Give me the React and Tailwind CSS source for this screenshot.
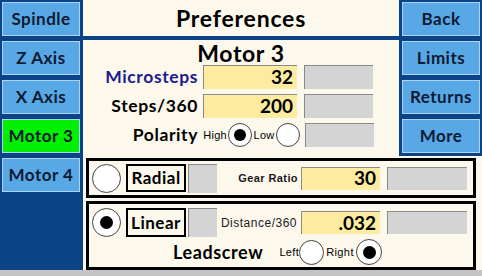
import React from "react";

const F = { fontFamily: "Lato, 'Liberation Sans', sans-serif" };
const T = { fontFamily: "'Liberation Sans', Arial, sans-serif" };

function NavBtn({ label, active }) {
  return (
    <div
      className={`h-[34px] w-[78px] flex items-center justify-center border border-[#a9d4f5] text-[17px] font-bold tracking-[0.5px] text-[#0d1a33] ${
        active ? "bg-[#00f000]" : "bg-[#58a8e6]"
      }`}
      style={F}
    >
      {label}
    </div>
  );
}

function Radio({ size, dot, on }) {
  return (
    <div
      className="rounded-full bg-white border border-[#444] flex items-center justify-center shrink-0"
      style={{ width: size, height: size }}
    >
      {on && <div className="rounded-full bg-black" style={{ width: dot, height: dot }} />}
    </div>
  );
}

function Yellow({ value, w, h }) {
  return (
    <div
      className="bg-[#fdeba0] border-t border-l border-[#8a8a8a] flex items-center justify-end pr-[4px] text-[19px] font-bold text-black shrink-0"
      style={{ width: w, height: h, ...F }}
    >
      {value}
    </div>
  );
}

function Gray({ w, h }) {
  return (
    <div
      className="bg-[#d4d4d4] border-t border-l border-[#8a8a8a] shrink-0"
      style={{ width: w, height: h }}
    />
  );
}

function Label({ children, color }) {
  return (
    <div
      className={`w-[115px] text-right text-[17.5px] font-bold tracking-[0.6px] whitespace-nowrap ${color}`}
      style={F}
    >
      {children}
    </div>
  );
}

export default function App() {
  return (
    <div className="w-[482px] h-[276px] bg-[#0b4386] flex flex-col overflow-hidden">
      <div className="flex h-[270px]">
        <div className="w-[83px] flex flex-col gap-[5px] pt-[2px] pl-[2px]">
          <NavBtn label="Spindle" />
          <NavBtn label="Z Axis" />
          <NavBtn label="X Axis" />
          <NavBtn label="Motor 3" active />
          <NavBtn label="Motor 4" />
        </div>
        <div className="w-[399px] flex flex-col">
          <div className="flex h-[156px]">
            <div className="w-[316px] flex flex-col gap-[4px]">
              <div
                className="h-[36px] bg-[#fdf8ec] flex items-center justify-center text-[23px] font-bold tracking-[0.8px] text-black"
                style={F}
              >
                Preferences
              </div>
              <div className="flex-1 bg-[#fdf8ec] flex flex-col">
                <div
                  className="h-[25px] flex items-center justify-center text-[23px] font-bold tracking-[0.6px] text-black leading-none pt-[2px]"
                  style={F}
                >
                  Motor 3
                </div>
                <div className="flex flex-col gap-[5px]">
                  <div className="flex items-center h-[24px]">
                    <Label color="text-[#1b1b8e]">Microsteps</Label>
                    <div className="ml-[5px]">
                      <Yellow value="32" w={94} h={24} />
                    </div>
                    <div className="ml-[7px]">
                      <Gray w={69} h={24} />
                    </div>
                  </div>
                  <div className="flex items-center h-[24px]">
                    <Label color="text-black">Steps/360</Label>
                    <div className="ml-[5px]">
                      <Yellow value="200" w={94} h={24} />
                    </div>
                    <div className="ml-[7px]">
                      <Gray w={69} h={24} />
                    </div>
                  </div>
                  <div className="flex items-center h-[24px]">
                    <Label color="text-black">Polarity</Label>
                    <div
                      className="w-[29px] text-right text-[11px] tracking-[0.3px] text-black whitespace-nowrap"
                      style={T}
                    >
                      High
                    </div>
                    <div className="ml-[1px]">
                      <Radio size={24} dot={12} on />
                    </div>
                    <div
                      className="w-[24px] text-center text-[11px] tracking-[0.2px] text-black whitespace-nowrap"
                      style={T}
                    >
                      Low
                    </div>
                    <Radio size={24} dot={12} />
                    <div className="ml-[5px]">
                      <Gray w={69} h={24} />
                    </div>
                  </div>
                </div>
              </div>
            </div>
            <div className="w-[83px] flex flex-col gap-[5px] pt-[2px] pl-[3px]">
              <NavBtn label="Back" />
              <NavBtn label="Limits" />
              <NavBtn label="Returns" />
              <NavBtn label="More" />
            </div>
          </div>
          <div className="flex-1 bg-[#fdf8ec] pt-[2px] pl-[3px] pr-[6px] flex flex-col gap-[3px]">
            <div className="h-[40px] border-[3px] border-black flex items-center pl-[3px]">
              <Radio size={29} dot={13} />
              <div
                className="ml-[5px] w-[60px] h-[28px] border-2 border-black flex items-center justify-center text-[17px] font-bold tracking-[0.5px] text-black"
                style={F}
              >
                Radial
              </div>
              <div className="ml-[2px]">
                <Gray w={29} h={29} />
              </div>
              <div
                className="w-[81px] text-right text-[11px] font-bold tracking-[0.4px] text-[#1a1a1a] whitespace-nowrap"
                style={T}
              >
                Gear Ratio
              </div>
              <div className="ml-[3px]">
                <Yellow value="30" w={79} h={23} />
              </div>
              <div className="ml-[7px]">
                <Gray w={80} h={23} />
              </div>
            </div>
            <div className="flex-1 border-[3px] border-black flex flex-col pl-[3px]">
              <div className="flex items-center h-[35px] pt-[2px]">
                <Radio size={29} dot={13} on />
                <div
                  className="ml-[5px] w-[60px] h-[29px] border-2 border-black flex items-center justify-center text-[17px] font-bold tracking-[0.5px] text-black"
                  style={F}
                >
                  Linear
                </div>
                <div className="ml-[2px]">
                  <Gray w={29} h={29} />
                </div>
                <div
                  className="w-[81px] text-right pr-[1px] text-[12px] tracking-[0.5px] text-[#1a1a1a] whitespace-nowrap"
                  style={T}
                >
                  Distance/360
                </div>
                <div className="ml-[3px]">
                  <Yellow value=".032" w={79} h={23} />
                </div>
                <div className="ml-[7px]">
                  <Gray w={80} h={23} />
                </div>
              </div>
              <div className="flex items-center h-[26px]">
                <div
                  className="w-[173px] pl-[81px] text-[18px] font-bold tracking-[0.6px] text-black whitespace-nowrap"
                  style={F}
                >
                  Leadscrew
                </div>
                <div
                  className="w-[34px] text-right text-[11px] tracking-[0.3px] text-black whitespace-nowrap"
                  style={T}
                >
                  Left
                </div>
                <Radio size={25} dot={13} />
                <div
                  className="w-[32px] text-center text-[11px] tracking-[0.4px] text-black whitespace-nowrap"
                  style={T}
                >
                  Right
                </div>
                <Radio size={26} dot={13} on />
              </div>
            </div>
          </div>
        </div>
      </div>
      <div className="h-[6px] bg-[#c4c4c4]" />
    </div>
  );
}
